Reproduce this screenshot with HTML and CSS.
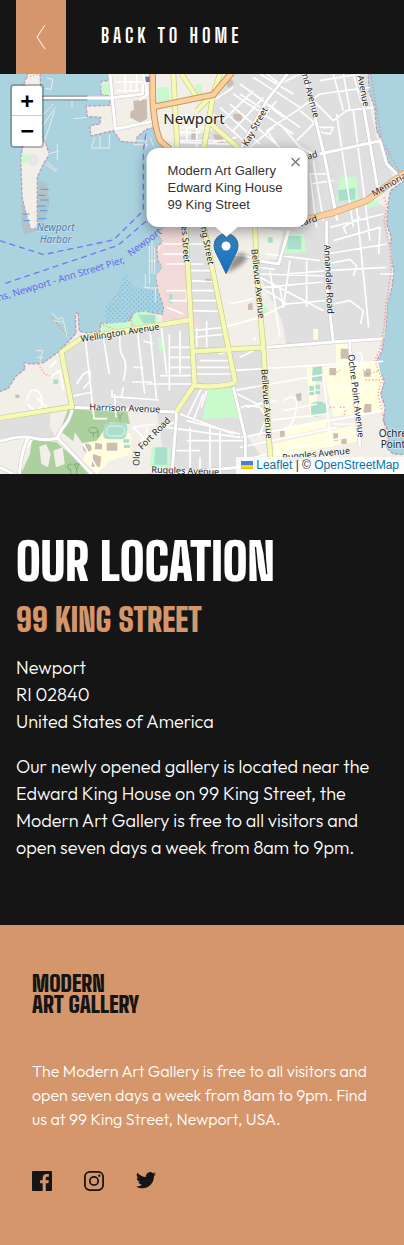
FILE: index.html
```html
<!DOCTYPE html>
<html lang="en">
<head>
<meta charset="utf-8">
<meta name="viewport" content="width=device-width, initial-scale=1">
<title>Modern Art Gallery - Our Location</title>
<link rel="stylesheet" href="styles.css">
</head>
<body>
<header class="topbar">
  <a class="back" href="#home">
    <span class="back-icon"><svg width="10" height="26" viewBox="0 0 10 26" aria-hidden="true"><path d="M9 1 1 13l8 12" fill="none" stroke="#fff"/></svg></span>
    <span class="back-label">Back to home</span>
  </a>
</header>
<main>
  <section class="map" aria-label="Map of Newport">
    <svg class="map-canvas" viewBox="0 0 1212 1200" preserveAspectRatio="xMidYMid slice" role="img" aria-label="Street map">
      <rect class="water" x="-900" width="3012" height="1200"/>
      <path class="land coast" d="M328-5 326 20 305 22 302 60 330 66 330 94 258 96 262 128 302 130 300 150 270 155 272 186 340 170 362 202 408 206 412 188 440 166 466 160 470 200 500 222 492 460 474 482 490 500 470 520 474 560 488 580 468 604 474 650 488 690 494 722 440 714 404 716 390 738 360 750 318 748 302 748 300 772 258 776 238 772 234 714 226 720 228 778 208 800 172 836 130 866 92 870 70 866 76 884 48 906 24 944-5 954V1205H1215V1142L1180 1140 1160 1122 1168 1080 1150 1040 1156 1000 1142 960 1154 922 1138 890 1130 860 1146 830 1158 760 1162 690 1176 640 1182 590 1168 530 1174 490 1160 450 1166 380 1172 350 1215 318V290L1190 296 1164 262 1146 200 1130 170 1124 100 1106 50 1104-5Z"/>
      <path class="land coast" d="M84-5 72 30 92 60 122 40 120-5ZM72 200 62 250 66 370 78 420 92 466 112 462 112 310 130 270 148 242 138 210 124 190Z"/>
      <path class="tidal" d="M66 380 78 420 92 466 112 462 116 318 142 330 148 390 138 430 112 470 74 482 64 452Z"/>
      <path class="tidal-line" d="M122 346h24M114 364h22M120 378h26M112 396h26M120 410h22M68 420h20M114 434h26M70 440h20"/>
      <path class="green" d="M68 240 94 242 86 266 64 270Z"/><circle cx="100" cy="258" r="17" fill="#e6e6e6"/>
      <!-- built-up areas -->
      <path class="urban" d="M640 60 700-5H1100L1112 110 1132 200 1152 260 1180 310 1120 380 1158 400 1158 460 1172 520 1178 600 1162 690 1154 792 860 816 846 740 776 600 765 460 530 220 530 190 640 170Z"/>
      <path class="urban" d="M524 460H612L690 820 710 940 720 1060 830 1205H500L470 1010 400 1000 216 1000 186 838 258 794 476 762 568 740ZM0 1042 150 1016 150 1060 166 1090 90 1090 0 1094ZM690 830 786 828 800 1000 812 1080 724 1090Z"/>
      <path class="pink" d="M492 460H556L566 735 484 742 494 700 476 650 468 604 486 582 472 540 488 500 474 480ZM574 730h24v28h-24ZM780 500l30-16 30 10-20 60-36-6Z"/>
      <path class="land" d="M650 580 760 540 786 800 690 812Z"/>
      <path class="land" d="M770 460 850 470 830 556 776 560ZM345 20H450L460 150 350 160Z"/>
      <path class="yellow" d="M1008 810h40v66h-40ZM968 880 1134 862 1148 920 1140 960 1150 1016 1000 1026ZM820 1110 1080 1050 1084 1100 822 1150ZM850 1060 980 1036 980 1060 850 1088ZM940 765h14v32h-14ZM920 880h30v150h-20ZM260 1110 330 1055 392 1080 392 1140 330 1160 290 1200 250 1160Z"/>
      <path class="forest" d="M205 1005 380 1005 390 1050 330 1045 290 1100 230 1110 180 1070ZM96 1095 170 1105 220 1150 270 1205H60L90 1140Z"/>
      <path class="land" d="M118 1118l20-8 14 30-8 40-20-10ZM160 1130l28-10 6 50-26 10ZM225 1075l40 60-20 20-30-30Z"/>
      <path class="green" d="M626 940 708 936 716 1030 608 1036ZM474 790h18l4 46h-18ZM456 1118h52v60h-60ZM300 750 390 744 404 716 440 712 472 730 476 760 310 772ZM302 26h26v36h-20ZM850 540 862 478 912 480 918 534ZM1008 380 1020 310 1070 308 1076 380ZM780 700l16-4 12 20-20 10ZM1086 388l50-10v16l-30 10ZM586 30h20v34h-14ZM470 40l36-2 4 46-40 6Z"/>
      <path class="pitch" d="M312 1058q4-12 20-12h36q16 0 14 20l-4 20q-4 10-16 10h-36q-18 0-16-16ZM466 1120h36v52h-40ZM938 880l28-4v46h-30ZM932 990q24-16 46 0l4 22q-20 22-48 14ZM928 936h14v14h-14ZM946 932h14v14h-14ZM928 954h14v10h-14ZM946 950h14v10h-14ZM866 486h38v40h-44ZM1014 348l52-6v34l-50 6ZM508 660h10v28h-10ZM804 490h14v16h-14ZM370 1096h18v10h-18ZM372 1112h18v10h-18ZM160 916h14v14h-14ZM414 722h52v26h-36Z"/>
      <rect class="pitch-line" x="320" y="1056" width="54" height="30" rx="14"/>
      <path class="building" d="M400 80 440 76 442 134 420 146 390 130 392 112 402 108ZM700 120h26v20h-26ZM574 170h14v30h-14ZM640 180l30 6v20h-24ZM614 614h20v14h-14ZM988 882h20v22h-20ZM1090 884h22v24h-20ZM320 1106h32v24h-32ZM286 1106l20 4v16h-22ZM280 1140l24 8-4 30h-26ZM1022 824h30v30h-30ZM1000 1078h14v22h-14ZM1024 1094h16v16h-16ZM1094 990h20v26h-24ZM744 690l14-4v22h-14ZM678 24l18-10 6 16-18 12ZM840 1070h14v18h-14ZM888 960l16-4v24h-14ZM46 962h12v10h-12Z"/>
      <circle class="building" cx="262" cy="1122" r="13"/>
      <path fill="#7277ad" d="M436 8h20v16h-20Z"/>
      <path class="beach" d="M1112 0 1132 120 1144 190M1156 214 1196 290M1152 370 1162 400 1152 440 1170 520 1174 590 1158 690 1152 760 1142 820 1124 860 1146 916 1134 960 1148 1020 1162 1090 1158 1120M1100 900l40-10M1096 918h50M990 1000h50l-10 30M1000 900l20-10M300 750l40 14M390 730l10 30M80 10l34-10M114 870l20 30 16 6M156 730l50 60"/>
      <pattern id="dots" width="14" height="14" patternUnits="userSpaceOnUse"><circle cx="3" cy="4" r="2" fill="#5aa5dc"/><circle cx="10" cy="11" r="2" fill="#5aa5dc"/></pattern>
      <path fill="url(#dots)" d="M378 598 400 640 470 650 492 716 440 712 404 716 390 744 318 746 316 700 350 660Z"/>
      <!-- piers -->
      <path class="pier" d="M140 12l18 4-4 30-20-2M120 130l40-40M126 160l40-60M134 200l30-90M140 240l36-8M172 210v50M140 262l32 28M136 270l32 22M220 134l42-4M284 190l-10 32h54v-40M300 186v34M216 82v20M380 200h50M400 212h44M438 180v40M450 190l12 30M448 500v130M456 500v100M464 520v80M436 600v42h40M470 560h-22M430 640h20M466 640v44M156 716l16 20 16-6 14 60M160 740l28 4M108 830l20 0-8 30 2 20M110 850h20"/>
      <!-- minor streets -->
      <path class="street-edge" d="M128 72H262"/>
      <g class="lane">
        <path d="M345 24H430M350 50H440M376 0V58M410 0V52M392 20V54M430 0l12 60-24 20M532 200H700M600 175H530M560 120v80M590 130v90M540 140h60M545 160h70M532 205l170 6M620 210l90-20M700 60 880 180M690 90 840 220M660 100 780 210M720 30 900 160M760 10 900 100M780 0 880 60M640 120 730 200M640 80 700 40M670 140 760 50M700 170 790 70M730 200 830 80M720 60 780 100M800 90l50 40M830 210l-30-40 90-60 70-50M750 220l70-60M800 0l40 30 60-30M960 20l120-20M960 60 1110 40M1000 0l30 110M1030 0l20 110M1060 0l28 100M940 80l60 60 40-30 80-10M900 110 960 160M840 150l60 70 40 20M890 200l60-60M960 160h40l-10 20-30-6M1010 120l50 340M1060 110l50 390M940 260l30 180M980 300h-50l20 160M930 330l70-10M990 460l160-40M1000 500l140-40-4 80M980 540l180-30M980 590l180-10M980 570l70-14 20 20-10 30M1070 400l36 360M1080 430l-50 30 10 20M1140 600h40M860 600 980 590M870 560l-20 140M776 600 980 606M790 640l180-16M780 610l190 100M920 560v140M860 690 976 680M1000 690l50-10 40 30-8 40M690 690l70-16M776 580l50 6M800 540 960 560M862 470l-24 90"/>
        <path d="M490 510H620M490 540H560M500 570H610M570 590 640 590M576 620 640 624M576 650 650 650M576 680 660 680M576 710 660 712M580 770 670 760 780 730 860 690 800 650M580 790 680 780M510 680h55M500 650h60v30h-30M500 700l50 20M506 820h70M506 850h72M508 880h74M480 905H582M440 930H586M508 780V950M540 770V900M484 760 500 900M450 770 470 980M430 800l30 10M412 770l22 190M310 790l18 110M360 780q-4 50 10 70t0 70M256 794l26 240h40M400 880h30M396 924h60M220 966l58-12M336 948v20l140 10M344 960l4 70M370 940l-6 30M230 930l20-30 20-10v30l-20 24M590 760v60M620 740v80M600 860H694M590 880H700M580 900h125M690 890 1150 862M700 950 980 900M712 960l60 30 40-10M740 1000l90-20M720 1040q-20-60 60-40l20 30-24 60M720 1120l290-60M724 1090 1150 1010M730 1160 800 1140 1080 1080M800 1040l180-20M760 830l-40 20M736 820l-80 20M764 800v-10M970 900l14 130 10 90M1000 960l20-30 30 20M1000 980q20 50 50 10M1048 940h60M1048 900q30-40 50-10M1060 840q40-20 20 50M850 980q60-40 30 60l-20 30M800 900v60M810 590l30 200M850 700l-10-60M560 1040 720 1080M560 1100l170 0M540 1020 700 1080M500 1060l220 30M520 1090v110M570 1060v140M630 1060v140M660 1070v130M610 960l-30 80M604 944l-40 80M620 950l-16 50M396 1060l70-10M400 1060l40 40M440 1060v60M420 1100l110-60M530 1130l70 0M600 1150v50M80 980q10-40 30-30t14 50q-20 20-40-10M110 970l30 30M150 910l30-20 10 60M150 880l20-20M100 1092l-20 30M80 1092 70 1120M250 1110l40 70M850 1010l100-20M1000 1050h80v60"/>
      </g>
      <path class="road-edge" d="M262 72H330L428 60V30M330 0l16 166 112-24M862 0 800 80 724 220M912 0l60 240 40 200M960 240 1140 200 1160 270 1200 310M1074 0l60 350M980 440v190l20 176M800 820 1050 800 1146 794M1050 800v30l30 290M700 940l36 150v110M216 1000l310 14M530 1014l-14 186M216 1005q-4 30-30 60l-14 26 110 116M0 1102q60-20 100-10t74 0M86 1090q-20 30-28 110M0 1180l40 20M776 560l60 10 30-100M690 540l90 14M440 1205 720 1180"/>
      <path class="road" d="M128 72H330L428 60V30M330 0l16 166 112-24M862 0 800 80 724 220M912 0l60 240 40 200M960 240 1140 200 1160 270 1200 310M1074 0l60 350M980 440v190l20 176M800 820 1050 800 1146 794M1050 800v30l30 290M700 940l36 150v110M216 1000l310 14M530 1014l-14 186M216 1005q-4 30-30 60l-14 26 110 116M0 1102q60-20 100-10t74 0M86 1090q-20 30-28 110M0 1180l40 20M776 560l60 10 30-100M690 540l90 14M440 1205 720 1180"/>
      <!-- secondary and primary roads -->
      <path class="secondary-edge" d="M520 0 532 220M545 0 590 70M660 0 640 60 590 110M640 60 612 220M622 140 716 222M556 450 584 934M610 450 706 926M765 450 770 600 790 820 814 1205M0 1032 216 998 184 834 246 792 568 738M580 832 792 820M528 1014 582 934Q640 944 706 926"/>
      <path class="secondary" d="M520 0 532 220M545 0 590 70M660 0 640 60 590 110M640 60 612 220M622 140 716 222M556 450 584 934M610 450 706 926M765 450 770 600 790 820 814 1205M0 1032 216 998 184 834 246 792 568 738M580 832 792 820M528 1014 582 934Q640 944 706 926"/>
      <path class="primary-edge" d="M458-5V60Q460 150 480 200L510 226M464 98 640 62 696-5M860 450 1000 416 1100 380 1215 296"/>
      <path class="primary" d="M458-5V60Q460 150 480 200L510 226M464 98 640 62 696-5"/>
      <path class="primary wide" d="M860 450 1000 416 1100 380 1215 296"/>
      <!-- ferry routes -->
      <path class="ferry" d="M0 500 130 542 340 498 430 410V230L440 166M16 628 354 514 440 440"/>
      <!-- trees -->
      <path class="tree" d="M280 1090v-14h-4a8 8 0 1 1 4-14 8 8 0 1 1 2 14h-2M294 1090v-20M212 1200v-14a8 8 0 1 1 6-12M230 1200v-16l-8-14 16 0-8 14M352 1018l8 10v14M360 1028l10-12"/>
      <g class="label">
        <text class="town" x="490" y="150">Newport</text>
        <text transform="translate(742 218) rotate(-61)">Kay Street</text>
        <text transform="translate(906 2) rotate(75)">nd Avenue</text>
        <text transform="translate(1072 6) rotate(79)">Avenue</text>
        <text transform="translate(924 257) rotate(-16)">ad</text>
        <text transform="translate(1122 368) rotate(-30)">Memorial</text>
        <text transform="translate(900 458) rotate(-17)">vard</text>
        <text transform="translate(544 456) rotate(86)">es Street</text>
        <text transform="translate(602 460) rotate(79)">ng Street</text>
        <text transform="translate(754 526) rotate(84)">Bellevue Avenue</text>
        <text transform="translate(784 886) rotate(86)">Bellevue Avenue</text>
        <text transform="translate(972 512) rotate(87)">Annandale Road</text>
        <text transform="translate(1044 842) rotate(83)">Ochre Point Avenue</text>
        <text transform="translate(244 804) rotate(-9)">Wellington Avenue</text>
        <text transform="translate(268 1008) rotate(2)">Harrison Avenue</text>
        <text transform="translate(426 1128) rotate(-45)">Fort Road</text>
        <text transform="translate(418 1176) rotate(-88)">Old</text>
        <text transform="translate(454 1196) rotate(2)">Ruggles Avenue</text>
        <text transform="translate(848 1160) rotate(-6)">Ruggles Avenue</text>
        <text class="place-name" x="1136" y="1089">Ochre</text>
        <text class="place-name" x="1142" y="1123">Point</text>
      </g>
      <g class="sea-label">
        <text x="110" y="471">Newport</text>
        <text x="119" y="507">Harbor</text>
      </g>
      <g class="ferry-label">
        <text transform="translate(-4 682) rotate(-17)">ns, Newport - Ann Street Pier,</text>
        <text transform="translate(392 548) rotate(-37)">Newport</text>
      </g>
    </svg>

    <div class="zoom-control">
      <button type="button" aria-label="Zoom in">+</button>
      <button type="button" aria-label="Zoom out">−</button>
    </div>

    <div class="pin">
      <div class="bubble">
        <p>Modern Art Gallery<br>Edward King House<br>99 King Street</p>
        <button class="close" type="button" aria-label="Close popup"><svg width="10" height="10" viewBox="0 0 10 10"><path d="m1 1 8 8M9 1 1 9" stroke="#757575" stroke-width="1.3"/></svg></button>
      </div>
      <svg class="tip" width="24" height="10" viewBox="0 0 24 10" aria-hidden="true"><path d="M1 0h22L12 10Z" fill="#fff"/></svg>
      <svg class="marker" width="60" height="41" viewBox="-17 0 60 41" aria-hidden="true">
        <defs>
          <linearGradient id="pinFill" x2="0" y2="1"><stop stop-color="#3883b7"/><stop offset="1" stop-color="#126fc6"/></linearGradient>
          <filter id="soft" x="-50%" y="-50%" width="200%" height="200%"><feGaussianBlur stdDeviation="2"/></filter>
        </defs>
        <path d="M13 40 19 25Q30 16 33 24 34 30 13 40Z" fill="#000" opacity=".4" filter="url(#soft)"/>
        <path d="M12.500 .5A12 12 0 0 0 .5 12.500C.5 17 3 21 5.500 26L12.500 40.500 19.500 26C22 21 24.500 17 24.500 12.500A12 12 0 0 0 12.500.5Z" fill="url(#pinFill)" stroke="#2e6c97"/>
        <circle cx="12.500" cy="13" r="4.500" fill="#fff"/>
      </svg>
    </div>

    <div class="attribution">
      <a href="#leaflet"><svg width="12" height="8" viewBox="0 0 12 8" aria-hidden="true"><path fill="#4c7be1" d="M0 0h12v4H0z"/><path fill="#ffd500" d="M0 4h12v3H0z"/><path fill="#e0bc00" d="M0 7h12v1H0z"/></svg> Leaflet</a> | © <a href="#osm">OpenStreetMap</a>
    </div>
  </section>

  <section class="location">
    <h1>Our location</h1>
    <h2>99 King Street</h2>
    <address>Newport<br>RI 02840<br>United States of America</address>
    <p>Our newly opened gallery is located near the Edward King House on 99 King Street, the Modern Art Gallery is free to all visitors and open seven days a week from 8am to 9pm.</p>
  </section>
</main>
<footer class="footer">
  <div class="logo">Modern<br>Art Gallery</div>
  <p>The Modern Art Gallery is free to all visitors and open seven days a week from 8am to 9pm. Find us at 99 King Street, Newport, USA.</p>
  <nav class="social" aria-label="Social media">
    <a href="#facebook" aria-label="Facebook"><svg width="20" height="20" viewBox="0 0 20 20"><path d="M18.896 0H1.104C.494 0 0 .494 0 1.104v17.793C0 19.506.494 20 1.104 20h9.580v-7.745H8.076V9.237h2.606V7.010c0-2.583 1.578-3.990 3.883-3.990 1.104 0 2.052.082 2.329.119v2.700h-1.598c-1.254 0-1.496.597-1.496 1.470v1.928h2.989l-.390 3.018h-2.600V20h5.098c.608 0 1.102-.494 1.102-1.104V1.104C20 .494 19.506 0 18.896 0Z"/></svg></a>
    <a href="#instagram" aria-label="Instagram"><svg width="20" height="20" viewBox="0 0 20 20"><rect x=".9" y=".9" width="18.200" height="18.200" rx="5" fill="none" stroke="#151515" stroke-width="1.800"/><circle cx="10" cy="10" r="4.200" fill="none" stroke="#151515" stroke-width="1.800"/><circle cx="15.340" cy="4.660" r="1.200"/></svg></a>
    <a href="#twitter" aria-label="Twitter"><svg width="20" height="20" viewBox="0 0 20 20"><path d="M20 2.924a8.192 8.192 0 0 1-2.357.646 4.110 4.110 0 0 0 1.805-2.270 8.220 8.220 0 0 1-2.606.996A4.096 4.096 0 0 0 9.850 5.038c0 .32.030.637.106.935A11.650 11.650 0 0 1 1.393 1.750a4.116 4.116 0 0 0 1.270 5.478 4.086 4.086 0 0 1-1.858-.513v.052a4.106 4.106 0 0 0 3.292 4.023 4.100 4.100 0 0 1-1.853.070 4.106 4.106 0 0 0 3.833 2.850A8.250 8.250 0 0 1 0 15.407a11.616 11.616 0 0 0 6.290 1.843c7.618 0 11.922-6.434 11.663-12.205A8.354 8.354 0 0 0 20 2.924Z"/></svg></a>
  </nav>
</footer>
</body>
</html>
```

FILE: styles.css
```css
:root {
  --ink: #151515;
  --sand: #d5966c;
  --display: "Big Shoulders Display", "Liberation Sans Narrow", "Roboto", sans-serif;
  --body: "Outfit", "Lato", sans-serif;
}

* { box-sizing: border-box; }

body {
  margin: 0;
  background: var(--ink);
  color: #fff;
  font-family: var(--body);
  font-weight: 300;
}

h1, h2, p, address { margin: 0; }

a { color: inherit; text-decoration: none; }

/* Top bar */
.topbar { padding-left: 16px; }

.back { display: inline-flex; height: 74px; gap: 35px; }

.back-icon {
  display: flex;
  align-items: center;
  justify-content: center;
  width: 50px;
  background: var(--sand);
}

.back-label {
  align-self: center;
  padding-bottom: 4px;
  font-family: var(--display);
  font-size: 20px;
  font-weight: 700;
  letter-spacing: 4px;
  line-height: 24px;
  text-transform: uppercase;
}

/* Map */
.map {
  position: relative;
  height: 400px;
  overflow: hidden;
  font-family: "Liberation Sans", Arial, sans-serif;
  font-weight: 400;
}

.map-canvas { display: block; width: 100%; height: 100%; }

.map-canvas path { stroke-linejoin: round; }
.water { fill: #aad3df; }
.land { fill: #f2efe9; }
.coast { stroke: #b9a0bd; stroke-width: 4; stroke-dasharray: 10 4; }
.tidal { fill: #b4bec0; opacity: .8; }
.tidal-line { stroke: #46a0f0; stroke-width: 3; }
.urban { fill: #dfdfdf; }
.pink { fill: #f2dad9; }
.yellow { fill: #ffffe0; }
.green { fill: #c8facc; }
.forest { fill: #add19e; }
.pitch { fill: #aae0cb; }
.pitch-line { fill: none; stroke: #fff; stroke-width: 2; }
.building { fill: #cbbdb2; }
.beach { fill: none; stroke: #ff7b70; stroke-width: 4; stroke-dasharray: 4 6; opacity: .75; }
.pier { fill: none; stroke: #eeeae4; stroke-width: 3; }
.lane { fill: none; stroke: #fff; stroke-width: 5; }
.street-edge { fill: none; stroke: #555; stroke-width: 14; }
.road-edge { fill: none; stroke: #c8c8c8; stroke-width: 12; }
.road { fill: none; stroke: #fff; stroke-width: 9; }
.secondary-edge { fill: none; stroke: #c9cc86; stroke-width: 17; }
.secondary { fill: none; stroke: #f5f9b8; stroke-width: 13; }
.primary-edge { fill: none; stroke: #c59a5b; stroke-width: 20; }
.primary { fill: none; stroke: #fcd0a0; stroke-width: 14; }
.primary.wide { stroke-width: 17; }
.ferry { fill: none; stroke: #7678f2; stroke-width: 4; stroke-dasharray: 18 12; }
.tree { fill: none; stroke: #7daa70; stroke-width: 3; }

.label, .sea-label, .ferry-label {
  font-family: "Noto Sans", sans-serif;
  font-size: 27px;
  fill: #222;
  paint-order: stroke;
  stroke: rgba(255, 255, 255, .6);
  stroke-width: 4px;
}

.label .town { font-size: 45px; }
.label .place-name { font-size: 30px; }
.sea-label { font-size: 30px; font-style: italic; fill: #4f80b5; stroke: #c5dfe7; }
.ferry-label { font-size: 29px; fill: #6668ed; stroke: none; }

.zoom-control {
  position: absolute;
  top: 10px;
  left: 10px;
  display: flex;
  flex-direction: column;
  border: 2px solid rgba(0, 0, 0, .25);
  border-radius: 4px;
  background-clip: padding-box;
}

.zoom-control button {
  width: 30px;
  height: 30px;
  padding: 0;
  border: 0;
  background: #fff;
  color: #000;
  font: bold 22px/30px "DejaVu Sans Mono", monospace;
}

.zoom-control button:first-child {
  border-bottom: 1px solid #ccc;
  border-radius: 2px 2px 0 0;
}

.zoom-control button:last-child { border-radius: 0 0 2px 2px; }

.pin {
  position: absolute;
  top: 74px;
  left: calc(50% + 25px);
  display: flex;
  flex-direction: column;
  align-items: center;
  transform: translateX(-50%);
}

.bubble {
  position: relative;
  padding: 14px 25px 14px 21px;
  border-radius: 12px;
  background: #fff;
  box-shadow: 0 3px 14px rgba(0, 0, 0, .4);
  color: #333;
  font-size: 13px;
  line-height: 17px;
  white-space: nowrap;
}

.close {
  position: absolute;
  top: 0;
  right: 0;
  width: 24px;
  height: 24px;
  padding: 4px 0 0;
  border: 0;
  background: none;
}

.close svg { display: block; margin: auto; }

.tip { position: relative; z-index: 1; }

.marker { margin-top: -4px; }

.attribution {
  position: absolute;
  right: 0;
  bottom: 0;
  padding: 0 5px;
  background: rgba(255, 255, 255, .8);
  color: #333;
  font-size: 12px;
  line-height: 17px;
}

.attribution a { color: #0078a8; }

/* Location details */
.location {
  display: grid;
  gap: 18px;
  padding: 64px 16px;
  font-size: 18px;
  line-height: 27px;
}

.location h1, .location h2, .logo {
  font-family: var(--display);
  font-weight: 900;
  text-transform: uppercase;
}

.location h1 { font-size: 50px; line-height: 48px; }

.location h2 { color: var(--sand); font-size: 32px; line-height: 32px; }

.location address { font-style: normal; }

/* Footer */
.footer {
  padding: 48px 32px 54px;
  background: var(--sand);
  font-size: 16px;
  line-height: 24px;
}

.logo { color: var(--ink); font-size: 23px; line-height: 21px; }

.footer p { margin: 44px 0 40px; }

.social { display: flex; gap: 32px; }

.social a, .social svg { display: block; height: 20px; }

.social svg { fill: var(--ink); }
```
